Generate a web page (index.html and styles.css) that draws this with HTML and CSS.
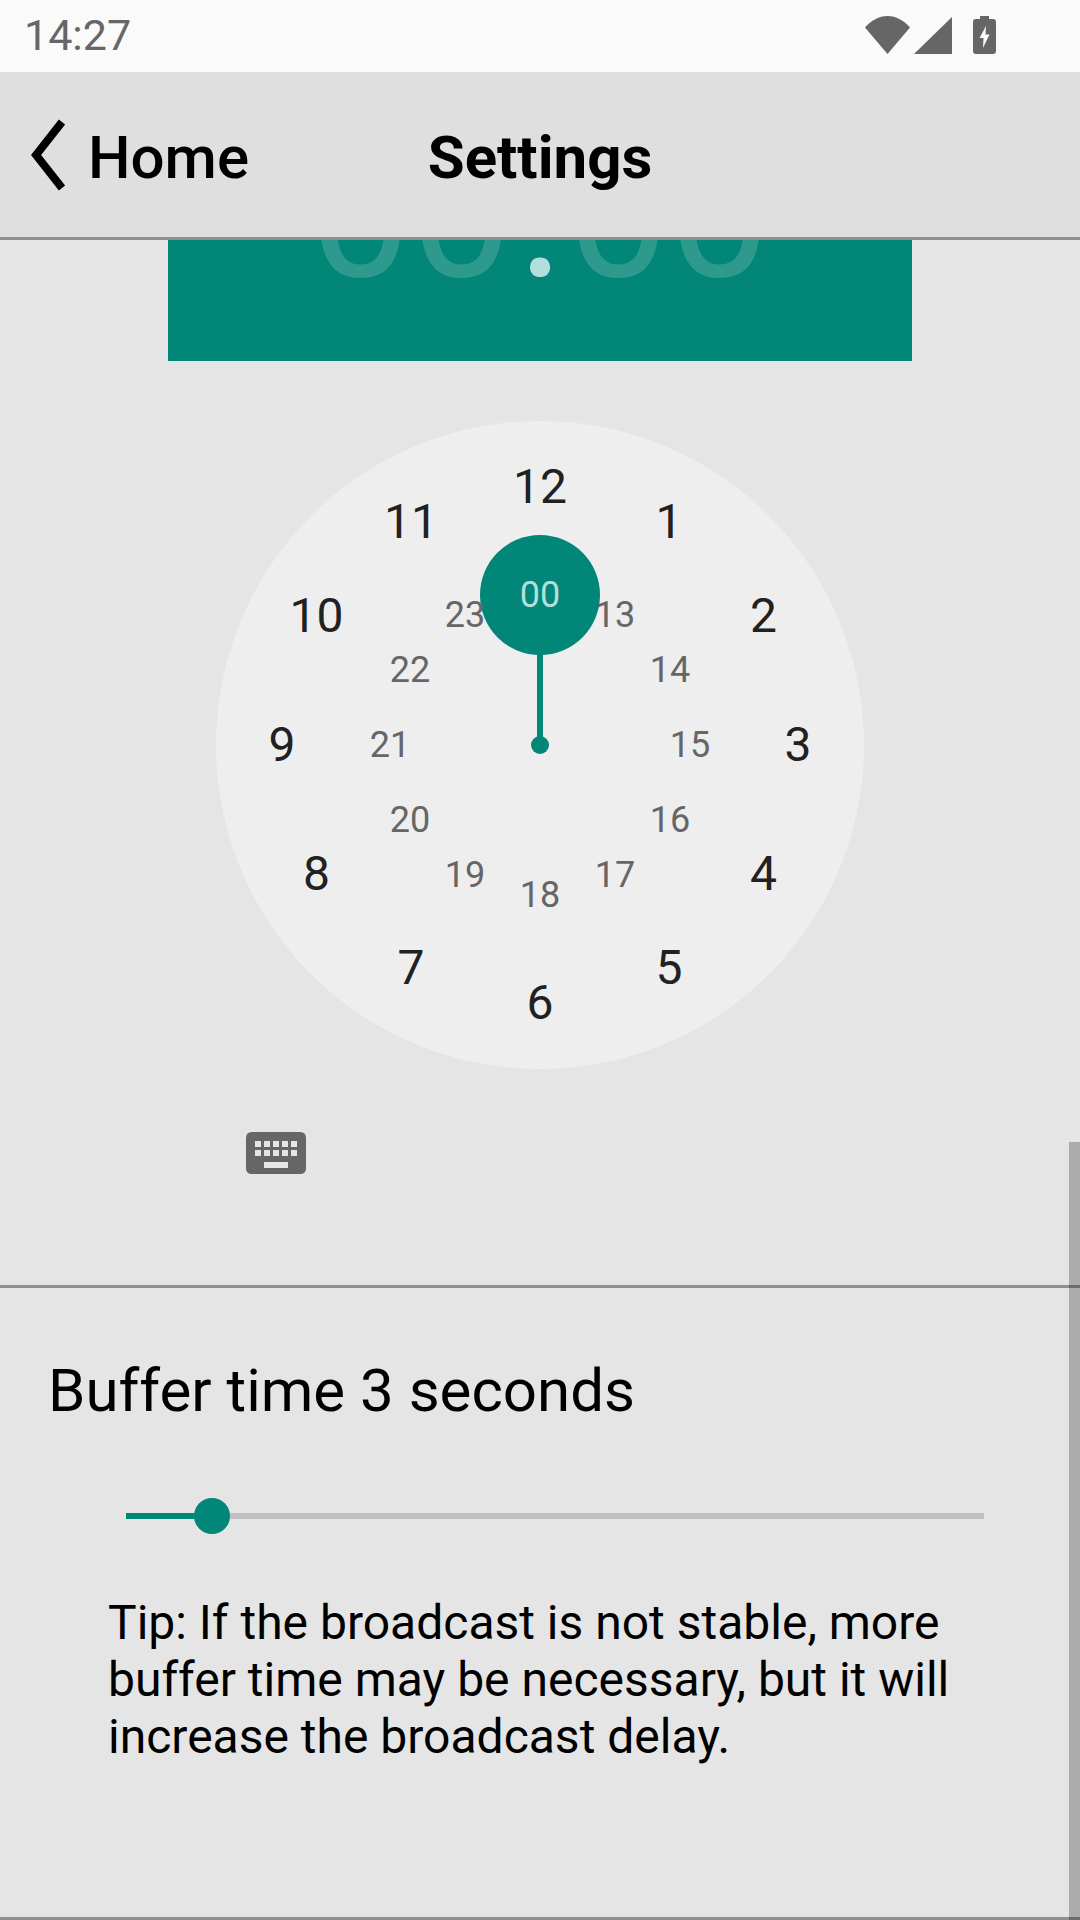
FILE: index.html
```html
<!DOCTYPE html>
<html>
<head>
	<title>Settings</title>
	<link rel="stylesheet" href="styles.css">
</head>
<body>
	<div class="status-bar">
		<span class="status-time">14:27</span>
		<div class="status-icons">
			<svg class="wifi-icon" width="45" height="38" viewBox="0 0 45 38"><path d="M0 11.5C6 4.5 14 0 22.5 0S39 4.500 45 11.500L22.500 38z"/></svg>
			<svg class="signal-icon" width="38" height="37" viewBox="0 0 38 37"><path d="M38 0V37H0z"/></svg>
			<svg class="battery-icon" width="23" height="38" viewBox="0 0 23 38"><path fill-rule="evenodd" d="M7 0H16V3H20Q23 3 23 6V35Q23 38 20 38H3Q0 38 0 35V6Q0 3 3 3H7zM13 10L6.500 22H10.500L10 32L16.500 18.500H12.500z"/></svg>
		</div>
	</div>
	<header class="title-bar">
		<div class="back-link">
			<svg class="back-icon" width="36" height="72" viewBox="0 0 36 72"><path d="M31 3L5 36L31 69" fill="none" stroke="#000" stroke-width="8"/></svg>
			<span>Home</span>
		</div>
		<h1 class="page-title">Settings</h1>
	</header>
	<main class="content">
		<section class="picker">
			<div class="time-head">
				<span class="time-part">00</span>
				<span class="time-colon">:</span>
				<span class="time-part">00</span>
			</div>
			<div class="clock" id="clock">
				<div class="clock-hand"></div>
				<div class="clock-pivot"></div>
				<div class="clock-selected"></div>
			</div>
			<div class="keyboard-row">
				<svg width="60" height="42" viewBox="0 0 60 42"><path fill="#666" fill-rule="evenodd" d="M6 0H54Q60 0 60 6V36Q60 42 54 42H6Q0 42 0 36V6Q0 0 6 0zM9 9V15H15V9zM18 9V15H24V9zM27 9V15H33V9zM36 9V15H42V9zM45 9V15H51V9zM9 18V24H15V18zM18 18V24H24V18zM27 18V24H33V18zM36 18V24H42V18zM45 18V24H51V18zM18 30V36H42V30z"/></svg>
			</div>
		</section>
		<section class="buffer">
			<h2 class="buffer-title">Buffer time 3 seconds</h2>
			<div class="slider">
				<div class="slider-fill"></div>
				<div class="slider-thumb"></div>
			</div>
			<p class="buffer-tip">Tip: If the broadcast is not stable, more buffer time may be necessary, but it will increase the broadcast delay.</p>
		</section>
	</main>
	<div class="scroll-thumb"></div>
	<script>
		const clock = document.getElementById("clock");

		function addNumber(label, index, radius, className) {
			const angle = index * Math.PI / 6;
			const number = document.createElement("span");
			number.className = className;
			number.textContent = label;
			number.style.left = (324 + radius * Math.sin(angle)) + "px";
			number.style.top = (324 - radius * Math.cos(angle)) + "px";
			clock.appendChild(number);
		}

		// outer ring 12, 1..11 and inner ring 00, 13..23
		for (let i = 0; i < 12; i++) {
			addNumber(i === 0 ? "12" : String(i), i, 258, "clock-number");
			addNumber(i === 0 ? "00" : String(i + 12), i, 150, i === 0 ? "clock-number inner active" : "clock-number inner");
		}
	</script>
</body>
</html>
```
FILE: styles.css
```css
* {
	box-sizing: border-box;
}
body {
	margin: 0;
	width: 1080px;
	height: 1920px;
	display: flex;
	flex-direction: column;
	position: relative;
	overflow: hidden;
	background: #e5e5e5;
	font-family: Roboto, sans-serif;
	color: #000;
}
.status-bar {
	height: 72px;
	background: #fafafa;
	display: flex;
	align-items: center;
	justify-content: space-between;
	padding: 0 84px 2px 24px;
}
.status-time {
	font-size: 43px;
	color: #666;
}
.status-icons {
	display: flex;
	align-items: center;
	gap: 4px;
	fill: #666;
}
.battery-icon {
	margin-left: 17px;
}
.title-bar {
	height: 168px;
	padding-top: 5px;
	background: #dfdfdf;
	border-bottom: 3px solid #8f8f8f;
	position: relative;
	display: flex;
	align-items: center;
	justify-content: center;
}
.back-link {
	position: absolute;
	left: 31px;
	top: 0;
	bottom: 0;
	display: flex;
	align-items: center;
	gap: 21px;
	font-size: 60px;
	font-weight: 500;
}
.back-link span {
	padding-top: 5px;
}
.page-title {
	margin: 0;
	font-size: 60px;
	font-weight: 700;
}
.content {
	flex: 1;
	display: flex;
	flex-direction: column;
}
.picker {
	height: 1048px;
	border-bottom: 3px solid #8f8f8f;
}
.time-head {
	width: 744px;
	height: 121px;
	margin: 0 auto;
	background: #018677;
	overflow: hidden;
	display: flex;
	align-items: flex-end;
	justify-content: center;
	gap: 6px;
	font-size: 180px;
	line-height: 1;
	padding-bottom: 56px;
}
.time-part,
.time-colon {
	flex-shrink: 0;
}
.time-part {
	color: #2e9a8e;
}
.time-colon {
	color: #b2dfdb;
}
.clock {
	width: 648px;
	height: 648px;
	margin: 60px auto 0;
	border-radius: 50%;
	background: #eee;
	position: relative;
}
.clock-number {
	position: absolute;
	transform: translate(-50%, -50%);
	font-size: 48px;
	line-height: 1;
	color: #212121;
}
.clock-number.inner {
	font-size: 36px;
	color: #666;
}
.clock-number.active {
	color: #b2dfdb;
}
.clock-selected {
	position: absolute;
	left: 264px;
	top: 114px;
	width: 120px;
	height: 120px;
	border-radius: 50%;
	background: #018677;
}
.clock-hand {
	position: absolute;
	left: 321px;
	top: 174px;
	width: 6px;
	height: 150px;
	background: #018677;
}
.clock-pivot {
	position: absolute;
	left: 315px;
	top: 315px;
	width: 18px;
	height: 18px;
	border-radius: 50%;
	background: #018677;
}
.keyboard-row {
	margin-top: 63px;
	padding-left: 246px;
	line-height: 0;
}
.buffer {
	flex: 1;
	border-bottom: 3px solid #8f8f8f;
	padding-top: 70px;
}
.buffer-title {
	margin: 0 0 0 48px;
	font-size: 60px;
	font-weight: 400;
	line-height: 66px;
}
.slider {
	position: relative;
	width: 858px;
	height: 6px;
	margin: 89px 0 0 126px;
	background: #c0c0c0;
}
.slider-fill {
	width: 86px;
	height: 6px;
	background: #018677;
}
.slider-thumb {
	position: absolute;
	left: 68px;
	top: -15px;
	width: 36px;
	height: 36px;
	border-radius: 50%;
	background: #018677;
}
.buffer-tip {
	width: 870px;
	margin: 75px 0 0 108px;
	font-size: 48px;
	line-height: 57px;
}
.scroll-thumb {
	position: absolute;
	right: 0;
	top: 1142px;
	bottom: 0;
	width: 11px;
	background: rgba(0, 0, 0, 0.25);
}
```
